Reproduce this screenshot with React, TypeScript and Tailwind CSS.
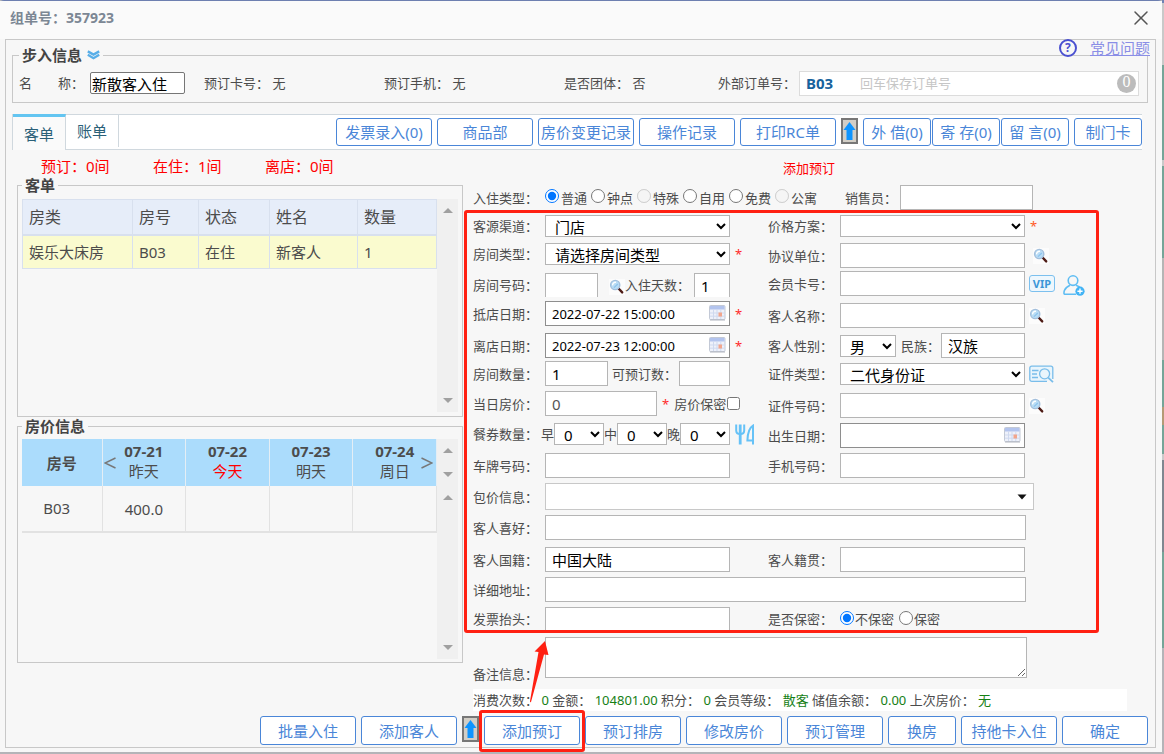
import { useState, type ReactNode } from "react";
import { X } from "lucide-react";

const EDGE = [
  { h: 3, color: "bg-[#6f82b5]" },
  { h: 62, color: "bg-[#c9c9c9]" },
  { h: 95, color: "bg-[#75a598]" },
  { h: 6, color: "bg-[#c9c9c9]" },
  { h: 92, color: "bg-[#75a598]" },
  { h: 102, color: "bg-[#b5b5b5]" },
  { h: 47, color: "bg-[#75a598]" },
  { h: 18, color: "bg-[#b59a76]" },
  { h: 29, color: "bg-[#75a598]" },
  { h: 6, color: "bg-[#c9c9c9]" },
  { h: 92, color: "bg-[#7f8790]" },
  { h: 96, color: "bg-[#75a598]" },
];

const GUEST_HEAD = ["房类", "房号", "状态", "姓名", "数量"];
const GUEST_ROW = ["娱乐大床房", "B03", "在住", "新客人", "1"];

const DAYS = [
  { date: "07-21", label: "昨天", price: "400.0" },
  { date: "07-22", label: "今天", price: "", today: true },
  { date: "07-23", label: "明天", price: "" },
  { date: "07-24", label: "周日", price: "" },
];

const STAY_TYPES = [
  { name: "普通" },
  { name: "钟点" },
  { name: "特殊", disabled: true },
  { name: "自用" },
  { name: "免费" },
  { name: "公寓", disabled: true },
];

const SUMMARY = [
  ["消费次数：", "0"],
  ["金额：", "104801.00"],
  ["积分：", "0"],
  ["会员等级：", "散客"],
  ["储值余额：", "0.00"],
  ["上次房价：", "无"],
];

const BOX = "border border-[#b5b5b5] bg-white text-[15px] outline-none";

/* ---------- icons ---------- */

function Magnifier() {
  return (
    <svg viewBox="0 0 16 16" className="size-4 shrink-0">
      <rect width="16" height="16" fill="#fcfcfc" />
      <path d="M9.8 9.8 L13.2 13.4" stroke="#4e1c16" strokeWidth="2.4" strokeLinecap="round" />
      <circle cx="6.2" cy="6" r="4.6" fill="#b9dcf5" stroke="#a3bfdc" strokeWidth="1.4" />
      <path d="M3.6 6.4 A2.8 2.8 0 0 1 7 3.4" fill="none" stroke="#fff" strokeWidth="1.4" />
      <path d="M5 8.6 L8.8 5" stroke="#8cc3ec" strokeWidth="1.2" />
    </svg>
  );
}

function Calendar() {
  return (
    <svg viewBox="0 0 17 16" className="pointer-events-none absolute right-[4px] top-[4px] h-4 w-[17px]">
      <rect x="0.5" y="0.5" width="15.5" height="14" rx="1" fill="#eef1fa" stroke="#c3c9d6" />
      <rect x="1" y="1" width="14.5" height="3.5" fill="#b3c4ee" />
      <path d="M1 8 H15.5 M1 11.2 H15.5 M4.5 4.5 V14 M8 4.5 V14 M11.8 4.5 V14" stroke="#cfd9ef" />
      <rect x="9.5" y="7.5" width="3.5" height="4" fill="#f2a58c" />
      <path d="M1 15 H16" stroke="#b2b6c0" />
    </svg>
  );
}

function AddGuestIcon() {
  return (
    <svg viewBox="0 0 22 21" className="h-[21px] w-[22px]">
      <g fill="none" stroke="#5fbdf3" strokeWidth="1.6">
        <circle cx="10" cy="5.6" r="4.8" />
        <path d="M13 19.2 H1.6 C0.6 19.2 1 16.8 1.4 15.6 C2.4 12.8 4.4 11.4 7 10.2 M13 10.2 C15 11 16.6 11.8 17.6 13.2" />
      </g>
      <circle cx="17" cy="16.2" r="4.6" fill="#43b4f5" />
      <path d="M14.4 16.2 H19.6 M17 13.6 V18.8" stroke="#fff" strokeWidth="1.4" />
    </svg>
  );
}

function CardReadIcon() {
  return (
    <svg viewBox="0 0 25 18" className="h-[18px] w-[25px]">
      <g fill="none" stroke="#79bdea" strokeWidth="1.3">
        <path
          d="M18 16.3 H2.6 A1.8 1.8 0 0 1 0.8 14.5 V3 A1.8 1.8 0 0 1 2.6 1.2 H22 A1.8 1.8 0 0 1 23.8 3 V14"
          fill="#e9f5fc"
        />
        <path d="M3 5.5 H9.5 M3 9 H8 M3 12.5 H9" />
        <circle cx="15.6" cy="8.8" r="5" />
        <path d="M19.2 12.6 L24 17.2" strokeWidth="1.8" />
      </g>
    </svg>
  );
}

function MealIcon() {
  return (
    <svg viewBox="0 0 20 21" className="h-[21px] w-5">
      <g fill="none" stroke="#66c2f7" strokeWidth="2">
        <path d="M1.2 0.5 V6.5 Q1.2 10 5.2 10 Q9.2 10 9.2 6.5 V0.5" />
        <path d="M5.2 0.5 V20.5" strokeWidth="2.8" />
        <path d="M18 20.5 V1.6 C14 4 12.6 9 12.4 16.4 H17" />
      </g>
    </svg>
  );
}

function UpArrowButton({ label }: { label: string }) {
  return (
    <button aria-label={label} className="h-[26px] w-[17px] shrink-0 border-2 border-[#777] bg-[#d2cec6]">
      <svg viewBox="0 0 13 22" className="h-[22px] w-[13px]">
        <path d="M6.5 2 L12.5 10 H9.5 V20 H3.5 V10 H0.5 Z" fill="#0e94ff" />
      </svg>
    </button>
  );
}

/* ---------- shared pieces ---------- */

function ActionButton({ children, className = "h-7 w-24" }: { children: ReactNode; className?: string }) {
  return (
    <button
      className={`shrink-0 whitespace-nowrap rounded-[3px] border border-[#4a86d8] bg-white text-[15px] text-[#4a86d8] ${className}`}
    >
      {children}
    </button>
  );
}

interface RowProps {
  label: string;
  id?: string;
  h: string;
  labelWidth?: string;
  children: ReactNode;
}

function Row({ label, id, h, labelWidth = "w-[72px]", children }: RowProps) {
  return (
    <div className={h}>
      <div className="flex items-center whitespace-nowrap">
        <label htmlFor={id} className={`${labelWidth} shrink-0`}>{label}</label>
        {children}
      </div>
    </div>
  );
}

function Star() {
  return <span className="ml-[5px] text-[#ff2a2a]">*</span>;
}

interface TextBoxProps {
  id: string;
  value?: string;
  color?: string;
  className?: string;
}

function TextBox({ id, value = "", color = "text-black", className = "w-[185px] h-[25px]" }: TextBoxProps) {
  return <input id={id} defaultValue={value} className={`${BOX} shrink-0 px-[6px] ${color} ${className}`} />;
}

function DateBox({ id, value = "" }: { id: string; value?: string }) {
  return (
    <div className="relative">
      <input id={id} defaultValue={value} className="h-[25px] w-[185px] border border-[#8e8e8e] bg-white px-[6px] text-[13px] text-black" />
      <Calendar />
    </div>
  );
}

function Select({ id, options, className = "w-[185px]" }: { id: string; options: string[]; className?: string }) {
  return (
    <select id={id} className={`${BOX} h-[22px] shrink-0 pl-[5px] pr-[5px] text-black ${className}`}>
      {options.map((o) => (
        <option key={o}>{o}</option>
      ))}
    </select>
  );
}

function ScrollTrack({ className }: { className: string }) {
  return (
    <div className={`flex w-[21px] flex-col items-center justify-between bg-[#f0f0f0] py-[9px] ${className}`}>
      <svg viewBox="0 0 10 5" className="h-[5px] w-2.5"><path d="M0 5 L5 0 L10 5 Z" fill="#a0a0a0" /></svg>
      <svg viewBox="0 0 10 5" className="h-[5px] w-2.5"><path d="M0 0 L5 5 L10 0 Z" fill="#a0a0a0" /></svg>
    </div>
  );
}

/* ---------- sections ---------- */

function WalkInInfo() {
  return (
    <fieldset className="ml-[6px] mr-[7px] h-[58px] border border-[#c8c8c8]">
      <legend className="ml-[6px] flex h-5 items-center gap-[5px] px-[3px] text-[15px] font-bold text-[#444]">
        步入信息
        <svg viewBox="0 0 13 10" className="h-2.5 w-[13px]">
          <path d="M0.8 1.4 L6.5 4.6 L12.2 1.4 M0.8 4.8 L6.5 8.2 L12.2 4.8" fill="none" stroke="#58aee8" strokeWidth="2.4" />
        </svg>
      </legend>
      <div className="flex h-9 items-center whitespace-nowrap pl-[6px] pr-2">
        <div className="flex w-[185px] items-center">
          <label htmlFor="groupName" className="w-[71px]">名　　称：</label>
          <input
            id="groupName"
            defaultValue="新散客入住"
            className="h-[22px] w-[95px] rounded-[2px] border border-[#767676] bg-white px-px text-[15px] text-black"
          />
        </div>
        <div className="w-[180px]">预订卡号： 无</div>
        <div className="w-[180px]">预订手机： 无</div>
        <div className="w-[154px]">是否团体： 否</div>
        <label htmlFor="outerNo" className="w-[81px]">外部订单号：</label>
        <div className="flex h-[25px] min-w-0 flex-1 items-center border border-[#dcdcdc] bg-white pl-[6px] pr-[2px]">
          <span className="w-[54px] text-[15px] font-bold text-[#17629c]">B03</span>
          <input
            id="outerNo"
            placeholder="回车保存订单号"
            className="min-w-0 flex-1 bg-transparent text-[13px] placeholder:text-[#c6c6c6]"
          />
          <span className="size-[19px] rounded-full bg-[#bcbcbc] text-center font-['Liberation_Serif',serif] text-base leading-[16px] text-white">
            0
          </span>
        </div>
      </div>
    </fieldset>
  );
}

function TabBar({ tab, onChange }: { tab: string; onChange: (t: string) => void }) {
  return (
    <div className="ml-[6px] mr-[13px] mt-[11px] flex h-9 border border-[#d0d8de] border-r-0 bg-white">
      {["客单", "账单"].map((t) => (
        <button
          key={t}
          onClick={() => onChange(t)}
          className={[
            "w-[53px] shrink-0 border-r border-[#d0d8de] text-[15px] text-[#2a6078]",
            t === tab ? "-mt-px h-9 border-t-[3px] border-t-[#63c5f1] bg-[#fafafa]" : "h-8",
          ].join(" ")}
        >
          {t}
        </button>
      ))}
      <div className="ml-auto flex gap-[5px] pt-[3px]">
        <ActionButton>发票录入(0)</ActionButton>
        <ActionButton>商品部</ActionButton>
        <ActionButton>房价变更记录</ActionButton>
        <ActionButton>操作记录</ActionButton>
        <ActionButton>打印RC单</ActionButton>
        <UpArrowButton label="更多打印" />
        <div className="flex gap-px">
          <ActionButton className="h-7 w-[68px]">外 借(0)</ActionButton>
          <ActionButton className="h-7 w-[68px]">寄 存(0)</ActionButton>
          <ActionButton className="h-7 w-[68px]">留 言(0)</ActionButton>
        </div>
        <ActionButton className="h-7 w-[68px]">制门卡</ActionButton>
      </div>
    </div>
  );
}

function GuestList() {
  return (
    <fieldset className="h-[241px] border border-[#c8c8c8]">
      <legend className="ml-1 h-[18px] px-[3px] text-[15px] font-bold leading-[18px] text-[#444]">客单</legend>
      <div className="flex px-1 pt-[5px]">
        <div className="flex-1">
          <table className="w-full table-fixed border-collapse text-left">
            <colgroup>
              <col className="w-[110px]" />
              <col className="w-[66px]" />
              <col className="w-[71px]" />
              <col className="w-[88px]" />
              <col />
            </colgroup>
            <thead>
              <tr className="h-[35px] bg-[#e6edf9] text-base">
                {GUEST_HEAD.map((h) => (
                  <th key={h} className="border border-b-2 border-[#d8e0ee] px-[6px] font-normal">{h}</th>
                ))}
              </tr>
            </thead>
            <tbody>
              <tr className="h-[34px] bg-[#fafbcf] text-[15px]">
                {GUEST_ROW.map((c) => (
                  <td key={c} className="border border-[#d8e0ee] px-[6px]">{c}</td>
                ))}
              </tr>
            </tbody>
          </table>
        </div>
        <ScrollTrack className="h-[213px]" />
      </div>
    </fieldset>
  );
}

function PriceInfo() {
  return (
    <fieldset className="h-[246px] border border-[#c8c8c8]">
      <legend className="ml-1 h-[18px] px-[3px] text-[15px] font-bold leading-[18px] text-[#444]">房价信息</legend>
      <div className="flex px-1 pt-1">
        <div className="relative flex-1">
          <table className="w-full table-fixed border-collapse text-center text-[15px]">
            <colgroup>
              <col className="w-20" />
            </colgroup>
            <thead>
              <tr className="h-[47px] bg-[#abdcfc] leading-5">
                <th className="border-r border-[#e4eef5]">房号</th>
                {DAYS.map((d) => (
                  <th key={d.date} className="border-r border-[#e4eef5] pb-1">
                    {d.date}
                    <div className={d.today ? "font-normal text-[#ff0000]" : "font-normal"}>{d.label}</div>
                  </th>
                ))}
              </tr>
            </thead>
            <tbody>
              <tr className="h-[46px] border-b-2 border-[#e2e2e2]">
                <td className="border-r border-[#e2e2e2] pb-0.5 pr-2.5">B03</td>
                {DAYS.map((d) => (
                  <td key={d.date} className="border-r border-[#e2e2e2]">{d.price}</td>
                ))}
              </tr>
            </tbody>
          </table>
          <button aria-label="前一天" className="absolute left-[82px] top-[18px]">
            <svg viewBox="0 0 12 12" className="size-3"><path d="M11.5 1 L1 6 L11.5 11" fill="none" stroke="#777" strokeWidth="1.4" /></svg>
          </button>
          <button aria-label="后一天" className="absolute right-1 top-[18px]">
            <svg viewBox="0 0 12 12" className="size-3"><path d="M0.5 1 L11 6 L0.5 11" fill="none" stroke="#777" strokeWidth="1.4" /></svg>
          </button>
        </div>
        <div>
          <ScrollTrack className="h-[47px]" />
          <ScrollTrack className="h-[173px]" />
        </div>
      </div>
    </fieldset>
  );
}

function LeftFields() {
  return (
    <div className="w-[295px] shrink-0">
      <Row label="客源渠道：" id="channel" h="h-7">
        <Select id="channel" options={["门店"]} />
      </Row>
      <Row label="房间类型：" id="roomType" h="h-[30px]">
        <Select id="roomType" options={["请选择房间类型"]} />
        <Star />
      </Row>
      <Row label="房间号码：" id="roomNo" h="h-7">
        <TextBox id="roomNo" className="h-6 w-[53px] border-b-0" />
        <button aria-label="查找房间" className="ml-[11px] pt-1"><Magnifier /></button>
        <label htmlFor="days" className="w-[69px]">入住天数：</label>
        <TextBox id="days" value="1" className="h-6 w-9 border-b-0" />
      </Row>
      <Row label="抵店日期：" id="arrive" h="h-8">
        <DateBox id="arrive" value="2022-07-22 15:00:00" />
        <Star />
      </Row>
      <Row label="离店日期：" id="leave" h="h-7">
        <DateBox id="leave" value="2022-07-23 12:00:00" />
        <Star />
      </Row>
      <Row label="房间数量：" id="roomCount" h="h-[30px]">
        <TextBox id="roomCount" value="1" className="h-[25px] w-[63px]" />
        <label htmlFor="bookable" className="ml-1 w-[67px]">可预订数：</label>
        <TextBox id="bookable" className="h-[25px] w-[51px]" />
      </Row>
      <Row label="当日房价：" id="todayPrice" h="h-8">
        <TextBox id="todayPrice" value="0" color="text-[#555]" className="h-[25px] w-28" />
        <Star />
        <label className="ml-[5px] flex items-center">
          房价保密
          <input type="checkbox" className="ml-px size-[13px]" />
        </label>
      </Row>
      <Row label="餐券数量：" h="h-[30px]" labelWidth="w-[68px]">
        <label htmlFor="breakfast">早</label>
        <Select id="breakfast" options={["0"]} className="w-[50px]" />
        <label htmlFor="lunch">中</label>
        <Select id="lunch" options={["0"]} className="w-[50px]" />
        <label htmlFor="dinner">晚</label>
        <Select id="dinner" options={["0"]} className="w-[50px]" />
        <button aria-label="餐券" className="ml-[5px]"><MealIcon /></button>
      </Row>
      <Row label="车牌号码：" id="plate" h="h-[30px]">
        <TextBox id="plate" />
      </Row>
    </div>
  );
}

function RightFields() {
  return (
    <div>
      <Row label="价格方案：" id="plan" h="h-7">
        <Select id="plan" options={[""]} />
        <span className="ml-[5px] text-[#ff5a1f]">*</span>
      </Row>
      <Row label="协议单位：" id="company" h="h-7">
        <TextBox id="company" />
        <button aria-label="查找单位" className="ml-2"><Magnifier /></button>
      </Row>
      <Row label="会员卡号：" id="member" h="h-8">
        <TextBox id="member" />
        <button className="ml-1 h-[17px] w-[26px] rounded-[3px] border border-[#7cc0ee] bg-[#eef7fd] text-[11px] font-bold leading-[15px] text-[#3d97d8]">
          VIP
        </button>
        <button aria-label="新增会员" className="ml-2 pt-1"><AddGuestIcon /></button>
      </Row>
      <Row label="客人名称：" id="guest" h="h-[30px]">
        <TextBox id="guest" />
        <button aria-label="查找客人" className="ml-1"><Magnifier /></button>
      </Row>
      <Row label="客人性别：" id="gender" h="h-[30px]">
        <Select id="gender" options={["男", "女"]} className="w-14" />
        <label htmlFor="nation" className="ml-[5px] w-10">民族：</label>
        <TextBox id="nation" value="汉族" className="h-[25px] w-[84px]" />
      </Row>
      <Row label="证件类型：" id="idType" h="h-[30px]">
        <Select id="idType" options={["二代身份证"]} />
        <button aria-label="读取证件" className="ml-1"><CardReadIcon /></button>
      </Row>
      <Row label="证件号码：" id="idNo" h="h-[30px]">
        <TextBox id="idNo" />
        <button aria-label="查找证件" className="ml-1"><Magnifier /></button>
      </Row>
      <Row label="出生日期：" id="birth" h="h-[30px]">
        <DateBox id="birth" />
      </Row>
      <Row label="手机号码：" id="phone" h="h-[30px]">
        <TextBox id="phone" />
      </Row>
    </div>
  );
}

function BookingForm() {
  const [stay, setStay] = useState("普通");

  return (
    <div className="min-w-0 flex-1">
      <div className="h-[35px] pl-[310px] pt-2 text-[#ff0000]">添加预订</div>

      <Row label="入住类型：" h="h-[30px]">
        {STAY_TYPES.map((s) => (
          <label key={s.name} className="flex w-[46px] shrink-0 items-center gap-0.5">
            <input
              type="radio"
              name="stay"
              disabled={s.disabled}
              checked={stay === s.name}
              onChange={() => setStay(s.name)}
              className="mb-[3px] size-[14px]"
            />
            {s.name}
          </label>
        ))}
        <label htmlFor="seller" className="ml-6 w-[55px]">销售员：</label>
        <TextBox id="seller" className="h-[25px] w-[133px]" />
      </Row>

      <div className="relative w-[625px]">
        <div className="flex">
          <LeftFields />
          <RightFields />
        </div>
        <Row label="包价信息：" id="pack" h="h-8">
          <div className="relative">
            <select id="pack" className="block h-[27px] w-[489px] appearance-none border border-[#c8c8c8] bg-white" />
            <svg viewBox="0 0 10 6" className="pointer-events-none absolute right-[7px] top-[11px] h-[6px] w-2.5">
              <path d="M0.5 0.5 H9.5 L5 5.5 Z" fill="#111" />
            </svg>
          </div>
        </Row>
        <Row label="客人喜好：" id="likes" h="h-8">
          <TextBox id="likes" className="h-[25px] w-[481px]" />
        </Row>
        <div className="flex">
          <div className="w-[295px]">
            <Row label="客人国籍：" id="country" h="h-[30px]">
              <TextBox id="country" value="中国大陆" />
            </Row>
          </div>
          <Row label="客人籍贯：" id="hometown" h="h-[30px]">
            <TextBox id="hometown" />
          </Row>
        </div>
        <Row label="详细地址：" id="address" h="h-[30px]">
          <TextBox id="address" className="h-[25px] w-[481px]" />
        </Row>
        <div className="flex">
          <div className="w-[295px]">
            <Row label="发票抬头：" id="invoice" h="h-[30px]">
              <TextBox id="invoice" className="h-6 w-[185px] border-b-0" />
            </Row>
          </div>
          <Row label="是否保密：" h="h-[30px]">
            <label className="flex h-6 items-center gap-px">
              <input type="radio" name="secret" defaultChecked className="mb-[3px] size-[14px]" />
              不保密
            </label>
            <label className="ml-[5px] flex items-center gap-px">
              <input type="radio" name="secret" className="mb-[3px] size-[14px]" />
              保密
            </label>
          </Row>
        </div>
        <div className="pointer-events-none absolute -left-[9px] -right-px -top-[5px] bottom-1 rounded-[3px] border-[3px] border-[#ff2012]" />
      </div>

      <div className="flex h-[52px] items-start">
        <label htmlFor="memo" className="w-[72px] pt-[27px]">备注信息：</label>
        <textarea id="memo" className="h-[41px] w-[482px] border border-[#b5b5b5] bg-white" />
      </div>

      <div className="mr-[21px] h-[22px] whitespace-nowrap bg-white leading-[22px]">
        {SUMMARY.map(([label, value]) => (
          <span key={label}>
            {label} <span className="text-[#158015]">{value}</span>{" "}
          </span>
        ))}
      </div>
    </div>
  );
}

function FooterBar() {
  return (
    <div className="mr-[7px] mt-[5px] flex justify-end gap-[5px] pb-0.5">
      <ActionButton className="h-[29px] w-24">批量入住</ActionButton>
      <ActionButton className="h-[29px] w-24">添加客人</ActionButton>
      <UpArrowButton label="更多客人操作" />
      <div className="relative">
        <ActionButton className="h-[29px] w-24">添加预订</ActionButton>
        <div className="pointer-events-none absolute -inset-x-[5px] -bottom-[7px] -top-[6px] rounded-[3px] border-[3px] border-[#ff2012]" />
        <svg viewBox="0 0 24 62" className="pointer-events-none absolute -top-[75px] left-[41px] h-[62px] w-6">
          <path d="M20 0 L23.5 14 L19 13.5 L6 61 Q5 62 5 60 L13.5 11 L9.5 10.5 Z" fill="#ff2012" />
        </svg>
      </div>
      <ActionButton className="h-[29px] w-24">预订排房</ActionButton>
      <ActionButton className="h-[29px] w-24">修改房价</ActionButton>
      <ActionButton className="h-[29px] w-24">预订管理</ActionButton>
      <ActionButton className="h-[29px] w-[68px]">换房</ActionButton>
      <ActionButton className="h-[29px] w-24">持他卡入住</ActionButton>
      <ActionButton className="h-[29px] w-[86px]">确定</ActionButton>
    </div>
  );
}

export default function App() {
  const [tab, setTab] = useState("客单");

  return (
    <div className="flex min-h-screen bg-[#b4b4b8] font-['Noto_Sans','Noto_Sans_CJK_SC',sans-serif] text-[13px] leading-5 text-[#4c4c4c]">
      <div className="mb-0.5 min-w-0 flex-1 rounded-t-[4px] border-t border-[#6d7fb0] bg-[#f7f7f7]">
        <header className="flex h-[38px] items-center justify-between bg-[#fafafa] pb-1 pl-2.5 pr-[9px]">
          <h1 className="text-sm font-bold text-[#7c8794]">组单号：357923</h1>
          <button aria-label="关闭"><X className="size-6 text-[#555]" strokeWidth={1.5} /></button>
        </header>

        <main className="relative ml-[5px] mr-[6px] border border-[#c8c8c8] pt-[5px]">
          <WalkInInfo />
          <a href="#faq" className="absolute right-[5px] -top-0.5 flex items-center gap-[13px] text-[15px] text-[#8a8ee6]">
            <span className="size-[18px] rounded-full border-2 border-[#4a50d0] bg-[#f7f7f7] text-center text-xs font-bold leading-[14px] text-[#4a50d0]">
              ?
            </span>
            <span className="underline">常见问题</span>
          </a>
          <TabBar tab={tab} onChange={setTab} />

          <div className="flex gap-2.5 pl-[11px] pr-[7px]">
            <div className="w-[446px] shrink-0">
              <div className="flex h-[25px] items-center pl-6 pt-[6px] text-[15px] text-[#ff0000]">
                <span className="w-28">预订：0间</span>
                <span className="w-28">在住：1间</span>
                <span className="w-28">离店：0间</span>
              </div>
              <div className="mt-px">
                <GuestList />
                <PriceInfo />
              </div>
            </div>
            <BookingForm />
          </div>

          <FooterBar />
        </main>
      </div>

      <div className="w-0.5 shrink-0">
        {EDGE.map((e, i) => (
          <div key={i} className={e.color} style={{ height: e.h }} />
        ))}
      </div>
    </div>
  );
}
